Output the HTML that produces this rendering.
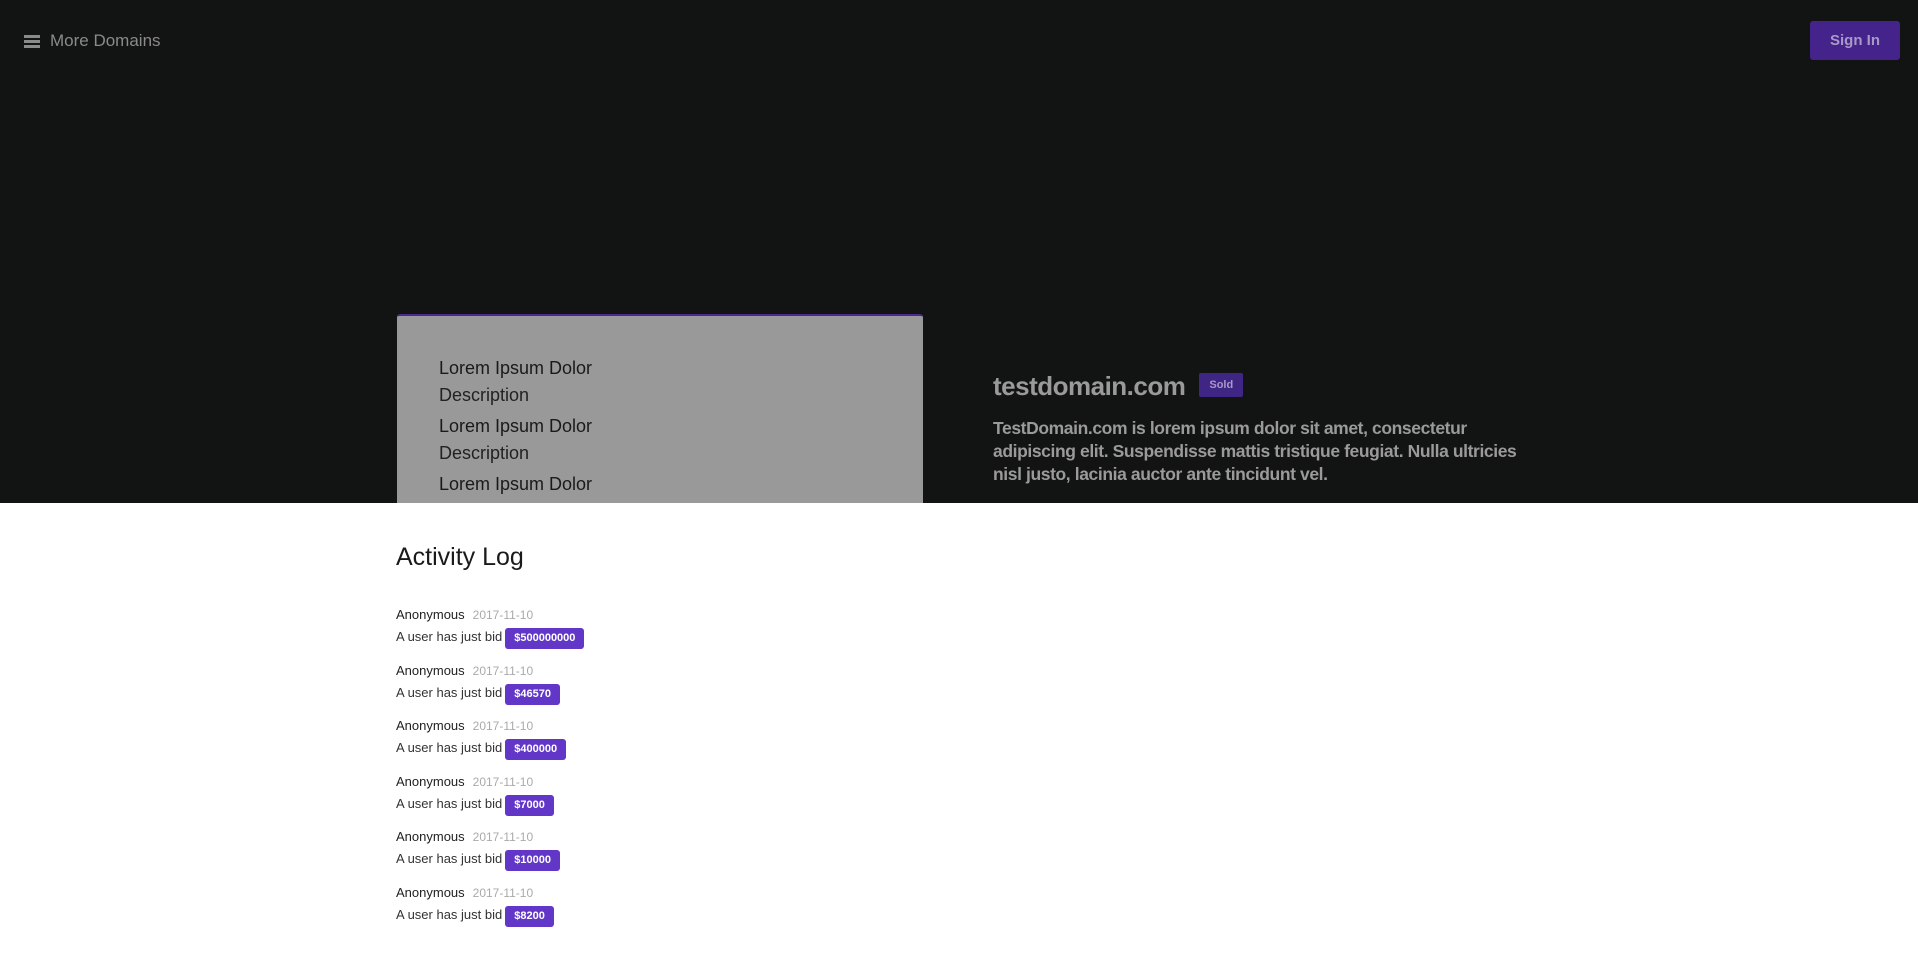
<!DOCTYPE html>
<html><head><meta charset="utf-8"><style>
*{margin:0;padding:0;box-sizing:border-box}
body{width:1918px;height:972px;background:#fff;font-family:"Liberation Sans",sans-serif;overflow:hidden;position:relative}
.hero{position:absolute;left:0;top:0;width:1918px;height:503px;background:#121313}
.menu{position:absolute;left:24px;top:30px;color:#8a8a8a;font-size:17px;line-height:22px}
.ham{position:absolute;left:0;top:5px;width:16px;height:13px}
.ham b{display:block;width:16px;height:3px;background:#8a8a8a;margin-bottom:2px}
.menu span{margin-left:26px}
.sign{position:absolute;left:1810px;top:21px;width:90px;height:39px;background:#44238a;border-radius:3px;color:#a999c9;font-weight:bold;font-size:15px;text-align:center;line-height:39px}
.card{position:absolute;left:397px;top:314px;width:526px;height:189px;background:#999;border-top:2px solid #4a2a8e;border-radius:3px 3px 0 0;overflow:hidden;padding:39px 0 0 42px;color:#1a1a1a;font-size:18px}
.card .t{line-height:27px}
.card .d{line-height:27px;margin-bottom:4px;color:#222}
.dom{position:absolute;left:993px;top:371px;color:#9a9a9a;font-size:26px;font-weight:bold;letter-spacing:-0.5px}
.sold{display:inline-block;vertical-align:middle;margin-left:14px;background:#3f2584;color:#a999c9;font-size:11px;padding:6px 10px;border-radius:2px;position:relative;top:-3px;letter-spacing:0}
.para{position:absolute;left:993px;top:417px;width:540px;color:#9a9a9a;font-size:17.5px;font-weight:bold;line-height:23px;letter-spacing:-0.4px}
h2{position:absolute;left:396px;top:543px;font-size:25px;font-weight:normal;color:#1a1a1a}
.log{position:absolute;left:396px;top:607px;font-size:13px;color:#333}
.e{height:55.6px}
.n{line-height:16px;color:#222}
.n i{font-style:normal;color:#aaa;margin-left:8px;font-size:12px}
.b{line-height:22px;margin-top:3px}
.b span{display:inline-block;background:#6237c8;color:#fff;font-weight:bold;font-size:11px;padding:0 9px;line-height:21px;border-radius:3px;margin-left:3px}
</style></head><body>
<div class="hero">
<div class="menu"><div class="ham"><b></b><b></b><b></b></div><span>More Domains</span></div>
<div class="sign">Sign In</div>
<div class="card">
<div class="t">Lorem Ipsum Dolor</div><div class="d">Description</div>
<div class="t">Lorem Ipsum Dolor</div><div class="d">Description</div>
<div class="t">Lorem Ipsum Dolor</div><div class="d">Description</div>
</div>
<div class="dom">testdomain.com<span class="sold">Sold</span></div>
<div class="para">TestDomain.com is lorem ipsum dolor sit amet, consectetur adipiscing elit. Suspendisse mattis tristique feugiat. Nulla ultricies nisl justo, lacinia auctor ante tincidunt vel.</div>
</div>
<h2>Activity Log</h2>
<div class="log">
<div class="e"><div class="n">Anonymous<i>2017-11-10</i></div><div class="b">A user has just bid<span>$500000000</span></div></div>
<div class="e"><div class="n">Anonymous<i>2017-11-10</i></div><div class="b">A user has just bid<span>$46570</span></div></div>
<div class="e"><div class="n">Anonymous<i>2017-11-10</i></div><div class="b">A user has just bid<span>$400000</span></div></div>
<div class="e"><div class="n">Anonymous<i>2017-11-10</i></div><div class="b">A user has just bid<span>$7000</span></div></div>
<div class="e"><div class="n">Anonymous<i>2017-11-10</i></div><div class="b">A user has just bid<span>$10000</span></div></div>
<div class="e"><div class="n">Anonymous<i>2017-11-10</i></div><div class="b">A user has just bid<span>$8200</span></div></div>
</div>
</body></html>
